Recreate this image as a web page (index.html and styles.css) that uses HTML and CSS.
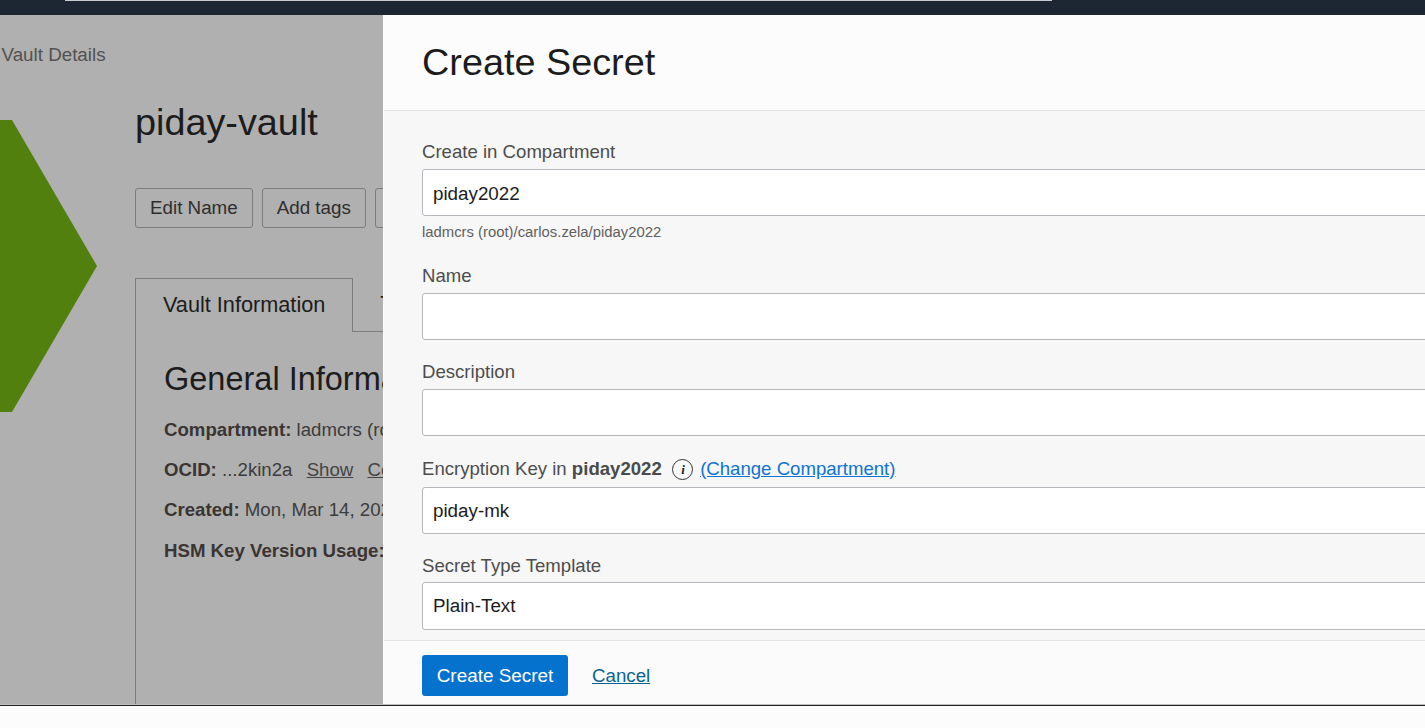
FILE: index.html
```html
<!DOCTYPE html>
<html lang="en">
<head>
<meta charset="utf-8">
<title>Create Secret</title>
<link rel="stylesheet" href="styles.css">
</head>
<body>
<div class="app">
  <header class="topbar"><div class="search-edge"></div></header>
  <main class="workspace">
    <section class="page">
      <div class="crumb">Vault Details</div>
      <div class="page-grid">
        <div class="badge-col">
          <svg class="hex" width="97" height="292" viewBox="0 0 97 292"><polygon points="0,0 12,0 97,146 12,292 0,292" fill="#52800f"/></svg>
        </div>
        <div class="detail">
          <h1 class="vault-title">piday-vault</h1>
          <div class="actions">
            <button class="btn">Edit Name</button>
            <button class="btn">Add tags</button>
            <button class="btn">Move Vault</button>
          </div>
          <div class="tabs">
            <div class="tab active">Vault Information</div>
            <div class="tab">Tags</div>
          </div>
          <div class="tab-body">
            <h2 class="section-title">General Information</h2>
            <p class="row"><b>Compartment:</b> ladmcrs (root)/carlos.zela/piday2022</p>
            <p class="row"><b>OCID:</b> ...2kin2a <a class="plain gap">Show</a> <a class="plain gap">Copy</a></p>
            <p class="row"><b>Created:</b> Mon, Mar 14, 2022, 18:00:00 UTC</p>
            <p class="row"><b>HSM Key Version Usage:</b> 0 of 1000</p>
          </div>
        </div>
      </div>
    </section>
    <aside class="panel">
      <div class="panel-head"><h2 class="panel-title">Create Secret</h2></div>
      <div class="panel-body">
        <div class="field f1">
          <label class="label">Create in Compartment</label>
          <div class="input">piday2022</div>
          <div class="hint">ladmcrs (root)/carlos.zela/piday2022</div>
        </div>
        <div class="field f2">
          <label class="label">Name</label>
          <div class="input"></div>
        </div>
        <div class="field f3">
          <label class="label">Description</label>
          <div class="input"></div>
        </div>
        <div class="field f4">
          <label class="label label-key">Encryption Key in <b class="strong">piday2022</b> <span class="info">i</span> <a class="link">(Change Compartment)</a></label>
          <div class="input">piday-mk</div>
        </div>
        <div class="field f5">
          <label class="label">Secret Type Template</label>
          <div class="input tall">Plain-Text</div>
        </div>
      </div>
      <div class="panel-foot">
        <button class="primary">Create Secret</button>
        <a class="cancel">Cancel</a>
      </div>
    </aside>
  </main>
  <footer class="strip"></footer>
</div>
</body>
</html>
```
FILE: styles.css
```css
* { box-sizing: border-box; }
html, body { margin: 0; height: 100%; overflow: hidden; }
body { font-family: "Liberation Sans", Arial, sans-serif; background: #fcfcfc; }
.app { height: 728px; display: flex; flex-direction: column; }

.topbar { height: 15px; background: #1c2733; flex: none; padding-left: 65px; }
.search-edge { width: 987px; height: 1px; background: #c9cdd1; }

.workspace { height: 689px; flex: none; display: flex; overflow: hidden; }
.strip { flex: 1; background: #fcfcfc; border-top: 1px solid #bdbdbd; box-shadow: inset 0 1px 0 #222; }

.page { width: 383px; flex: none; background: #b0b0b0; overflow: hidden; position: relative; }
.crumb { font-size: 18.8px; line-height: 22px; color: #525252; padding: 29px 0 0 1.5px; white-space: nowrap; }
.page-grid { display: flex; width: 1000px; margin-top: -1px; }
.badge-col { width: 135px; flex: none; padding-top: 55px; }
.hex { display: block; }
.detail { flex: 1; }
.vault-title { margin: 35px 0 0; font-size: 37.8px; line-height: 44px; font-weight: 400; color: #1c1c1c; }
.actions { display: flex; gap: 9px; margin-top: 44px; }
.btn { height: 40px; padding: 0 14px; border: 1px solid #7d7d7d; border-radius: 3px; background: transparent; font: 18.8px "Liberation Sans", Arial, sans-serif; color: #2e2e2e; white-space: nowrap; }
.tabs { display: flex; margin-top: 50px; height: 54px; }
.tab { padding: 0 27px; font-size: 21.7px; line-height: 52px; color: #1c1c1c; border-bottom: 1px solid #7d7d7d; }
.tab.active { border: 1px solid #7d7d7d; border-bottom: 0; }
.tab:last-child { flex: 1; }
.tab-body { border-left: 1px solid #7d7d7d; padding: 26px 0 0 28px; height: 380px; }
.section-title { margin: 0 0 19px; font-size: 32.5px; line-height: 42px; font-weight: 400; color: #1c1c1c; }
.row { margin: 0 0 17.7px; font-size: 18.65px; line-height: 22.5px; color: #3c3c3c; white-space: nowrap; }
.row b { color: #3a3532; }
.plain { text-decoration: underline; color: #444; }
.gap { margin-left: 9px; }

.panel { flex: 1; min-width: 0; display: flex; flex-direction: column; background: #f7f7f7; border-left: 1px solid #fcfcfc; overflow: hidden; }
.panel-head { height: 96px; flex: none; background: #fcfcfc; border-bottom: 1px solid #e2e2e2; padding: 25px 0 0 38px; }
.panel-title { margin: 0; font-size: 37.8px; line-height: 44px; font-weight: 400; color: #1c1c1c; }
.panel-body { flex: 1; padding: 30px 0 0 38px; overflow: hidden; }
.field { width: 1100px; }
.label { display: block; height: 22px; font-size: 18.6px; line-height: 22px; color: #4d4d4d; margin-bottom: 6px; }
.input { height: 47px; background: #fff; border: 1px solid #b6b6bd; border-radius: 3px; padding: 0 10px; font-size: 18.8px; line-height: 46px; color: #1c1c1c; }
.input.tall { height: 48px; }
.hint { margin-top: 7px; font-size: 14.85px; line-height: 18px; color: #5f5f5f; }
.f1 { margin-bottom: 24px; }
.f1 .input { line-height: 47px; }
.f2 { margin-bottom: 21px; }
.f3 { margin-bottom: 22px; }
.f4 { margin-bottom: 21px; }
.f4 .label { margin-bottom: 7px; }
.f5 .label { margin-bottom: 5px; }
.strong { color: #4a4a4a; }
.info { display: inline-flex; align-items: center; justify-content: center; width: 21px; height: 21px; margin: 0 1.5px 0 5.5px; border: 1.5px solid #333; border-radius: 50%; font: italic 700 13px "Liberation Serif", serif; color: #222; vertical-align: 1.5px; line-height: 1; }
.link { color: #0f73d2; text-decoration: underline; }

.panel-foot { height: 64px; flex: none; background: #fbfbfb; border-top: 1px solid #e4e4e4; padding: 14px 0 0 38px; display: flex; align-items: flex-start; gap: 24px; }
.primary { width: 146px; height: 41px; border: 0; border-radius: 3px; background: #0572ce; color: #fff; font: 18.9px "Liberation Sans", Arial, sans-serif; }
.cancel { font-size: 18.7px; line-height: 41px; color: #0b6391; text-decoration: underline; }
```
